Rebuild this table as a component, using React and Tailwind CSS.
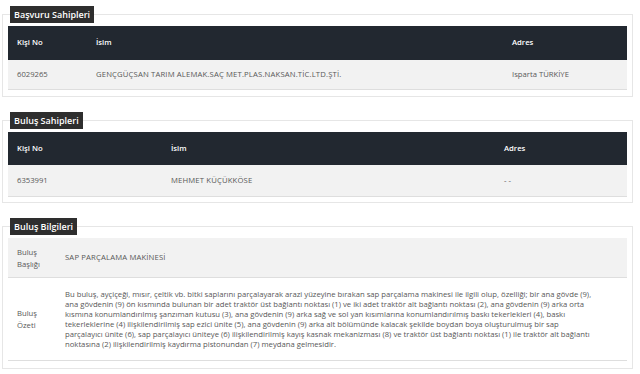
export default function App() {
  const font = { fontFamily: '"Open Sans", "Liberation Sans", sans-serif' }

  const ozet = [
    "Bu buluş, ayçiçeği, mısır, çeltik vb. bitki saplarını parçalayarak arazi yüzeyine bırakan sap parçalama makinesi ile ilgili olup, özelliği; bir ana gövde (9),",
    "ana gövdenin (9) ön kısmında bulunan bir adet traktör üst bağlantı noktası (1) ve iki adet traktör alt bağlantı noktası (2), ana gövdenin (9) arka orta",
    "kısmına konumlandırılmış şanzıman kutusu (3), ana gövdenin (9) arka sağ ve sol yan kısımlarına konumlandırılmış baskı tekerlekleri (4), baskı",
    "tekerleklerine (4) ilişkilendirilmiş sap ezici ünite (5), ana gövdenin (9) arka alt bölümünde kalacak şekilde boydan boya oluşturulmuş bir sap",
    "parçalayıcı ünite (6), sap parçalayıcı üniteye (6) ilişkilendirilmiş kayış kasnak mekanizması (8) ve traktör üst bağlantı noktası (1) ile traktör alt bağlantı",
    "noktasına (2) ilişkilendirilmiş kaydırma pistonundan (7) meydana gelmesidir.",
  ]

  return (
    <div className="w-[640px] h-[374px] bg-white pt-[6px] text-[#585858]" style={font}>
      {/* Başvuru Sahipleri */}
      <fieldset className="ml-[2px] w-[631px] border border-[#e6e6e6] px-[5px] pb-[6px]">
        <legend className="ml-[2px] bg-[#2e2e2e] px-[4px] h-[17px] leading-[17px] text-[9px] font-semibold text-white">
          Başvuru Sahipleri
        </legend>
        <div className="mt-[3px] text-[7.7px]">
          <div className="flex h-[34px] items-center bg-[#222830] font-semibold text-white">
            <div className="w-[88px] pl-[9px]">Kişi No</div>
            <div className="w-[416px]">İsim</div>
            <div>Adres</div>
          </div>
          <div className="flex h-[30px] items-center bg-[#f2f2f2] border-b border-[#dedede]">
            <div className="w-[88px] pl-[9px]">6029265</div>
            <div className="w-[416px] tracking-[0.15px]">GENÇGÜÇSAN TARIM ALEMAK.SAÇ MET.PLAS.NAKSAN.TİC.LTD.ŞTİ.</div>
            <div>Isparta TÜRKİYE</div>
          </div>
        </div>
      </fieldset>

      {/* Buluş Sahipleri */}
      <fieldset className="mt-[15px] ml-[2px] w-[631px] border border-[#e6e6e6] px-[5px] pb-[5px]">
        <legend className="ml-[2px] bg-[#2e2e2e] px-[4px] h-[17px] leading-[17px] text-[9px] font-semibold text-white">
          Buluş Sahipleri
        </legend>
        <div className="mt-[3px] text-[7.7px]">
          <div className="flex h-[33px] items-center bg-[#222830] font-semibold text-white">
            <div className="w-[163px] pl-[9px]">Kişi No</div>
            <div className="w-[333px]">İsim</div>
            <div>Adres</div>
          </div>
          <div className="flex h-[32px] items-center bg-[#f2f2f2] border-b border-[#dedede]">
            <div className="w-[163px] pl-[9px]">6353991</div>
            <div className="w-[333px] tracking-[0.15px]">MEHMET KÜÇÜKKÖSE</div>
            <div>- -</div>
          </div>
        </div>
      </fieldset>

      {/* Buluş Bilgileri */}
      <fieldset className="mt-[15px] ml-[2px] w-[631px] border border-[#e6e6e6] px-[5px] pb-[7px]">
        <legend className="ml-[2px] bg-[#2e2e2e] px-[4px] h-[17px] leading-[17px] text-[9px] font-semibold text-white">
          Buluş Bilgileri
        </legend>
        <div className="mt-[3px] text-[7.7px]">
          <div className="flex h-[40px] items-center bg-[#f2f2f2] border-b border-[#dedede]">
            <div className="w-[57px] pl-[9px] leading-[12px]">
              Buluş
              <br />
              Başlığı
            </div>
            <div className="tracking-[0.15px]">SAP PARÇALAMA MAKİNESİ</div>
          </div>
          <div className="flex items-center py-[11px] border-b border-[#dedede]">
            <div className="w-[57px] shrink-0 pl-[9px] leading-[12px]">
              Buluş
              <br />
              Özeti
            </div>
            <div className="leading-[10px]">
              {ozet.map((line, i) => (
                <div key={i} className="whitespace-nowrap">
                  {line}
                </div>
              ))}
            </div>
          </div>
        </div>
      </fieldset>
    </div>
  )
}
